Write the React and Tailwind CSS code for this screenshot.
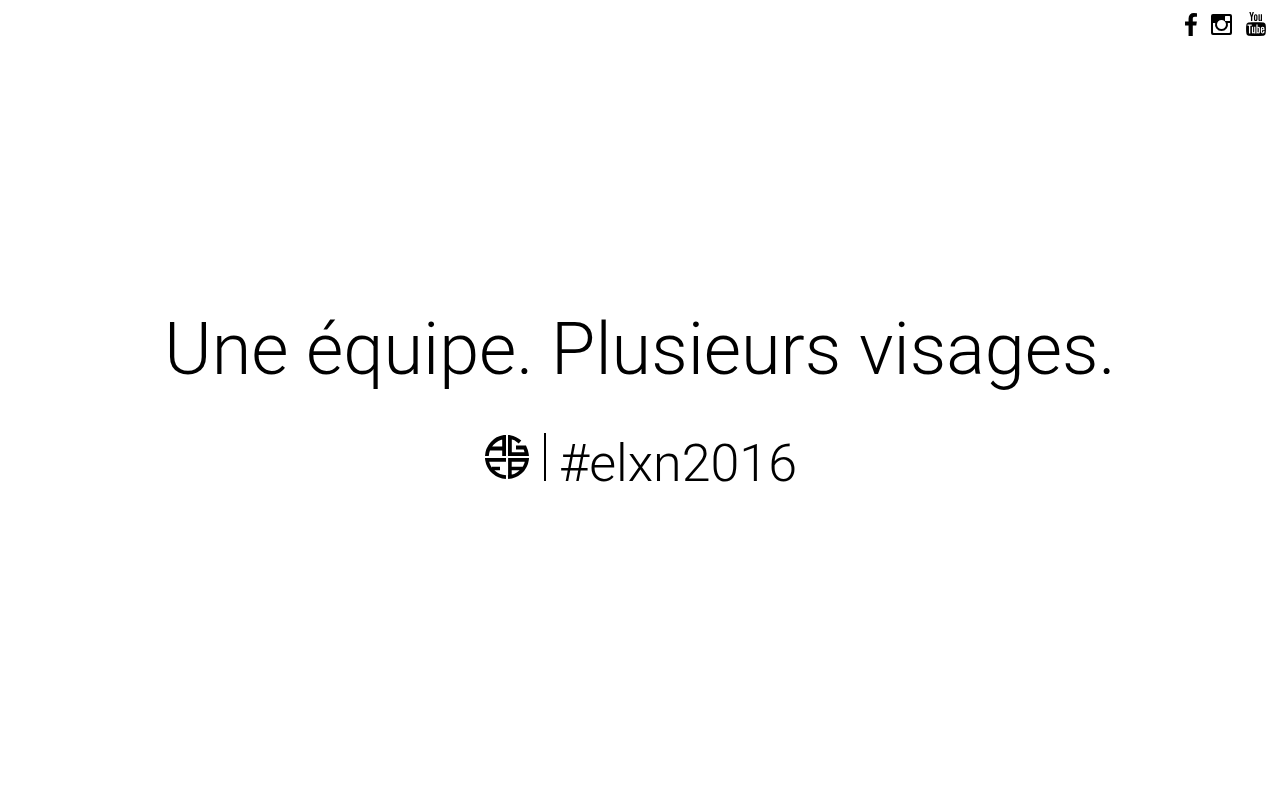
import { TfiYoutube } from "react-icons/tfi";

function FacebookIcon() {
  return (
    <svg viewBox="479 0 864 1664" className="h-[23px] w-4" fill="currentColor" aria-hidden="true">
      <path d="M1343 12v264h-157q-86 0-116 36t-30 108v189h293l-39 296h-254v759h-306v-759h-255v-296h255v-218q0-186 104-288.5t277-102.5q147 0 228 12z" />
    </svg>
  );
}

function InstagramIcon() {
  return (
    <svg viewBox="0 0 21 21" className="size-[21px]" fill="currentColor" aria-hidden="true">
      <path
        fillRule="evenodd"
        d="M2 0H19A2 2 0 0 1 21 2V19A2 2 0 0 1 19 21H2A2 2 0 0 1 0 19V2A2 2 0 0 1 2 0ZM14.6 2A.6.6 0 0 0 14 2.600V6.400A.6.6 0 0 0 14.600 7H18.400A.6.6 0 0 0 19 6.400V2.600A.6.6 0 0 0 18.400 2ZM2 9V18.200A.8.8 0 0 0 2.800 19H18.200A.8.8 0 0 0 19 18.200V9H16.800A6.500 6.500 0 1 1 4.200 9ZM10.500 6A4.500 4.500 0 1 0 10.500 15A4.500 4.500 0 1 0 10.500 6Z"
      />
    </svg>
  );
}

function Emblem() {
  return (
    <svg viewBox="0 0 44 44" className="size-11" fill="none" stroke="currentColor" strokeWidth="3.8" role="img" aria-label="AGEB">
      <path d="M1.900 21A20.200 20.200 0 0 1 19.100 2V21M4 13.500H19" />
      <path d="M35 7A20.200 20.200 0 0 0 24.900 2V19.100H41.800A20 20 0 0 0 39.800 12.500H31" />
      <path d="M21 24.900H2A20.200 20.200 0 0 0 21 42.100M7 33.500H15" strokeWidth="3.600" />
      <path d="M24.900 42V24.900H42A20.200 20.200 0 0 1 23 42.100M25 33.500H39" strokeWidth="3.600" />
    </svg>
  );
}

export default function App() {
  return (
    <div className="flex min-h-screen flex-col bg-white font-['Roboto',sans-serif] font-light text-black">
      <nav aria-label="Réseaux sociaux" className="flex h-12 items-center justify-end gap-3 px-3">
        <a href="#facebook" aria-label="Facebook"><FacebookIcon /></a>
        <a href="#instagram" aria-label="Instagram"><InstagramIcon /></a>
        <a href="#youtube" aria-label="YouTube"><TfiYoutube className="size-6" /></a>
      </nav>
      <main className="flex grow flex-col items-center justify-center pb-[51px] text-center">
        <h1 className="text-7xl leading-24 font-light">Une équipe. Plusieurs visages.</h1>
        <div className="mt-[35px] flex items-start pl-0.5">
          <div className="flex h-12 items-center pr-[15px]"><Emblem /></div>
          <div className="h-12 w-0.5 bg-black" />
          <p className="pl-[13px] text-[52px] leading-[62px]">#elxn2016</p>
        </div>
      </main>
    </div>
  );
}
